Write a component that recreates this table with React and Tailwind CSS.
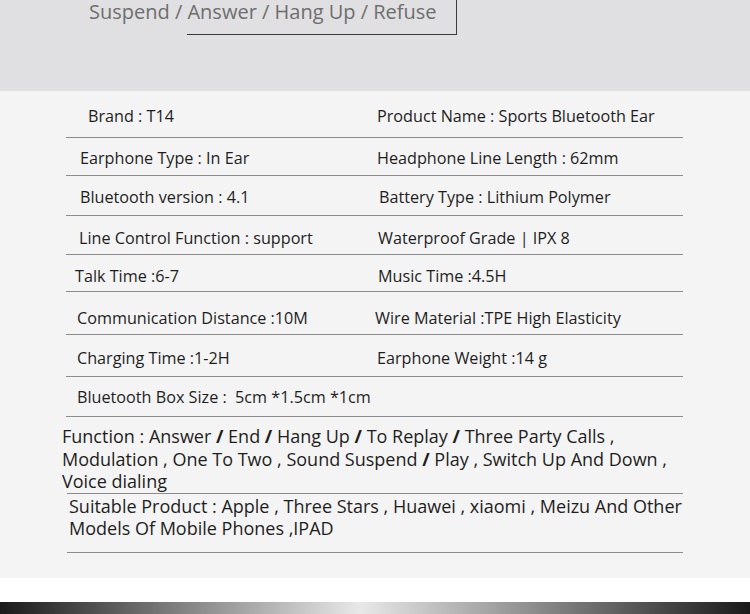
const rows = [
  { h: 'h-[47px]', pb: 'pb-[10px]', left: 'Brand : T14', lp: 'pl-[22px]', right: 'Product Name : Sports Bluetooth Ear', rp: 'pl-[311px]' },
  { h: 'h-[38px]', pb: 'pb-[6px]', left: 'Earphone Type : In Ear', lp: 'pl-[14px]', right: 'Headphone Line Length : 62mm', rp: 'pl-[311px]' },
  { h: 'h-[40px]', pb: 'pb-[7px]', left: 'Bluetooth version : 4.1', lp: 'pl-[14px]', right: 'Battery Type : Lithium Polymer', rp: 'pl-[313px]' },
  { h: 'h-[39px]', pb: 'pb-[5px]', left: 'Line Control Function : support', lp: 'pl-[13px]', right: 'Waterproof Grade | IPX 8', rp: 'pl-[312px]' },
  { h: 'h-[37px]', pb: 'pb-[4px]', left: 'Talk Time :6-7', lp: 'pl-[9px]', right: 'Music Time :4.5H', rp: 'pl-[312px]' },
  { h: 'h-[43px]', pb: 'pb-[5px]', left: 'Communication Distance :10M', lp: 'pl-[11px]', right: 'Wire Material :TPE High Elasticity', rp: 'pl-[309px]' },
  { h: 'h-[42px]', pb: 'pb-[7px]', left: 'Charging Time :1-2H', lp: 'pl-[11px]', right: 'Earphone Weight :14 g', rp: 'pl-[311px]' },
  { h: 'h-[40px]', pb: 'pb-[8px]', left: 'Bluetooth Box Size :  5cm *1.5cm *1cm', lp: 'pl-[11px]', right: '', rp: 'pl-[311px]' },
]

function SpecRow({ row }) {
  return (
    <div className={`${row.h} ${row.pb} flex items-end border-b border-[#8c8c8c]`}>
      <div className="relative w-full h-[22px]">
        <span className={`absolute left-0 top-0 ${row.lp} whitespace-pre`}>{row.left}</span>
        <span className={`absolute left-0 top-0 ${row.rp} whitespace-pre`}>{row.right}</span>
      </div>
    </div>
  )
}

export default function App() {
  return (
    <div className="w-[750px] h-[614px] bg-white overflow-hidden" style={{ fontFamily: '"Open Sans", "Noto Sans", sans-serif' }}>
      {/* top banner */}
      <div className="h-[91px] bg-[#e0e0e2] relative">
        <div className="absolute left-[187px] top-0 w-[270px] h-[35px] border-r border-b border-[#3a3a3a]" />
        <p className="pl-[89px] pt-[1px] text-[20px] leading-[22px] text-[#6e6e6e] whitespace-nowrap">
          Suspend / Answer / Hang Up / Refuse
        </p>
      </div>

      {/* spec table */}
      <div className="h-[487px] bg-[#f4f4f4] text-[16.2px] leading-[22px] text-[#1e1e1e]">
        <div className="ml-[66px] w-[617px]">
          {rows.map((row, i) => (
            <SpecRow key={i} row={row} />
          ))}
        </div>
        <p className="ml-[62px] mt-[8px] w-[640px] text-[18px] leading-[22.5px] whitespace-nowrap">
          Function : Answer <b>/</b> End <b>/</b> Hang Up <b>/</b> To Replay <b>/</b> Three Party Calls ,<br />
          Modulation , One To Two , Sound Suspend <b>/</b> Play , Switch Up And Down ,<br />
          Voice dialing
        </p>
        <div className="ml-[67px] w-[616px] border-t border-[#8c8c8c] pt-[1px] h-[60px] border-b">
          <p className="pl-[2px] text-[18px] leading-[22px] whitespace-nowrap">
            Suitable Product : Apple , Three Stars , Huawei , xiaomi , Meizu And Other<br />
            Models Of Mobile Phones ,IPAD
          </p>
        </div>
      </div>

      <div className="h-[24px] bg-white" />
      <div className="h-[12px] bg-[linear-gradient(to_right,#1a1a1a,#e8e8e8_48%,#1a1a1a)]" />
    </div>
  )
}
